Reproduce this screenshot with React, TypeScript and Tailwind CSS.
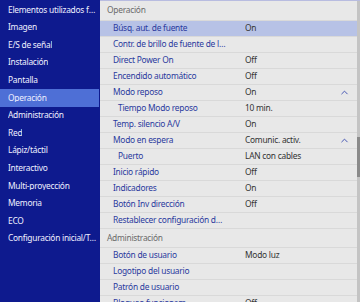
import { ChevronUp } from "lucide-react";

type Row = { label: string; value?: string; sub?: boolean; open?: boolean; active?: boolean };

const menu = [
  "Elementos utilizados frecuentemente",
  "Imagen",
  "E/S de señal",
  "Instalación",
  "Pantalla",
  "Operación",
  "Administración",
  "Red",
  "Lápiz/táctil",
  "Interactivo",
  "Multi-proyección",
  "Memoria",
  "ECO",
  "Configuración inicial/Todas las config.",
];

const operacion: Row[] = [
  { label: "Búsq. aut. de fuente", value: "On", active: true },
  { label: "Contr. de brillo de fuente de luz" },
  { label: "Direct Power On", value: "Off" },
  { label: "Encendido automático", value: "Off" },
  { label: "Modo reposo", value: "On", open: true },
  { label: "Tiempo Modo reposo", value: "10 min.", sub: true },
  { label: "Temp. silencio A/V", value: "On" },
  { label: "Modo en espera", value: "Comunic. activ.", open: true },
  { label: "Puerto", value: "LAN con cables", sub: true },
  { label: "Inicio rápido", value: "Off" },
  { label: "Indicadores", value: "On" },
  { label: "Botón Inv dirección", value: "Off" },
  { label: "Restablecer configuración de operación" },
];

const admin: Row[] = [
  { label: "Botón de usuario", value: "Modo luz" },
  { label: "Logotipo del usuario" },
  { label: "Patrón de usuario" },
  { label: "Bloqueo funcionam.", value: "Off" },
];

function SettingRow({ row }: { row: Row }) {
  return (
    <div
      className={`flex items-center h-[16px] border-b border-[#d9d9d9] ${row.active ? "bg-[#b7c2e6]" : ""}`}
    >
      <div className={`truncate text-[#2a3a9e] ${row.sub ? "pl-[18px] w-[132px]" : "pl-[13px] w-[126px]"}`}>
        {row.label}
      </div>
      <div className={`${row.sub ? "ml-[13px]" : "ml-[19px]"} flex-1 text-[#333333] truncate`}>{row.value}</div>
      {row.open && <ChevronUp size={11} strokeWidth={2} className="text-[#3a4cb0] mr-[7px]" />}
    </div>
  );
}

export default function App() {
  return (
    <div
      className="flex w-[360px] h-[302px] overflow-hidden text-[8.4px] tracking-[-0.25px] leading-none"
      style={{ fontFamily: '"Noto Sans", "Open Sans", sans-serif' }}
    >
      <div className="w-[100px] shrink-0 bg-[#0e1a8e] pt-[1px] pr-[1px]">
        {menu.map((m) => (
          <div
            key={m}
            className={`h-[17.6px] flex items-center pl-[8px] pr-[2px] ${m === "Operación" ? "bg-[#4e6fd6]" : ""}`}
          >
            <span className="truncate text-[#eef0ff]">{m}</span>
          </div>
        ))}
      </div>

      <div className="flex-1 flex bg-[#e8e8e8] border-t border-[#b8bce0]">
        <div className="flex-1">
          <div className="h-[20px] flex items-center pl-[7px] text-[#6a6a6a] border-b border-[#d9d9d9]">Operación</div>
          {operacion.map((r) => (
            <SettingRow key={r.label} row={r} />
          ))}
          <div className="h-[19px] flex items-center pl-[7px] text-[#6a6a6a] border-b border-[#d9d9d9]">
            Administración
          </div>
          {admin.map((r) => (
            <SettingRow key={r.label} row={r} />
          ))}
        </div>
        <div className="w-[3px] bg-[#c4c4c4]">
          <div className="mt-[136px] h-[40px] bg-[#8a8a8a]" />
        </div>
      </div>
    </div>
  );
}
